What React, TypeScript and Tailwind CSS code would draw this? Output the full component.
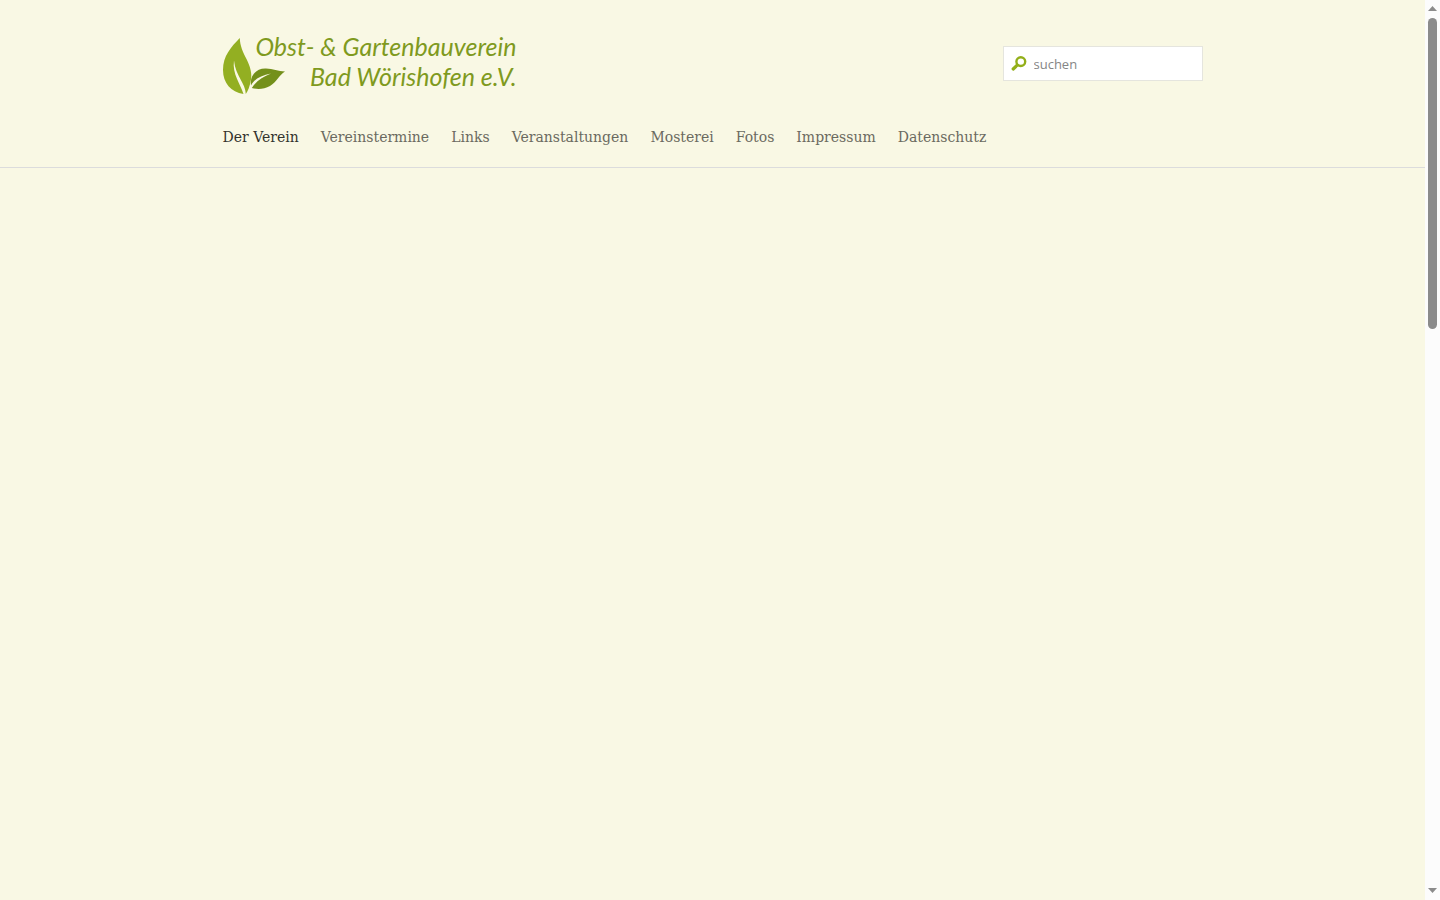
const navItems = [
  { label: 'Der Verein', href: '#verein', active: true },
  { label: 'Vereinstermine', href: '#termine' },
  { label: 'Links', href: '#links' },
  { label: 'Veranstaltungen', href: '#veranstaltungen' },
  { label: 'Mosterei', href: '#mosterei' },
  { label: 'Fotos', href: '#fotos' },
  { label: 'Impressum', href: '#impressum' },
  { label: 'Datenschutz', href: '#datenschutz' },
]

function LeafIcon() {
  return (
    <svg width="62" height="56" viewBox="0 0 62 56" aria-hidden="true">
      <path
        d="M16.8 0C17 8 20 14 23.5 21C27 28 29.8 36 27.5 44C26.5 49 25 53 22.8 56C22.5 45 12.5 38 11 22.5C9 36 17.5 46 20.5 56C8 54 0 45 0 32C0 18 8 9 16.8 0Z"
        fill="#93af22"
      />
      <path
        d="M28 47.5C26.5 37 34 30 43 30.5C50 30.5 55 33.5 62 33.5C56 37 54 44 47 48C41 51.5 34 51.5 28.8 50C33 43 40 39 48 35.5C38 37.5 31 41 28 47.5Z"
        fill="#74901b"
      />
    </svg>
  )
}

function Logo() {
  return (
    <a href="#start" className="grid w-[294px] text-[#7f9a1e]">
      <span className="col-start-1 row-start-1 pt-[7px]">
        <LeafIcon />
      </span>
      <span className="col-start-1 row-start-1 text-right font-['Lato',sans-serif] text-[25px] leading-[30px] italic whitespace-nowrap">
        Obst- &amp; Gartenbauverein
        <br />
        Bad Wörishofen e.V.
      </span>
    </a>
  )
}

function SearchBox() {
  return (
    <form
      role="search"
      className="mt-[15px] flex h-[35px] w-[200px] items-center gap-[7px] border border-[#e5e5de] bg-white pl-[7px]"
    >
      <label htmlFor="search" className="shrink-0">
        <svg
          width="16"
          height="16"
          viewBox="0 0 16 16"
          fill="none"
          stroke="#93af1a"
          role="img"
          aria-label="suchen"
        >
          <circle cx="9.8" cy="5.6" r="4.4" strokeWidth="2.4" />
          <path d="M6.2 9.2L2.2 13" strokeWidth="3.2" strokeLinecap="round" />
        </svg>
      </label>
      <input
        id="search"
        type="text"
        placeholder="suchen"
        className="h-full w-full min-w-0 bg-transparent pt-px font-['Open_Sans',sans-serif] text-[13px] text-[#777] outline-none placeholder:text-[#858585]"
      />
    </form>
  )
}

function ScrollTrack() {
  return (
    <div className="flex w-[15px] shrink-0 flex-col items-center bg-[#fcfcfc] pt-[6px] pb-[7px]" aria-hidden="true">
      <svg width="9" height="5" viewBox="0 0 9 5" fill="#8b8b8b">
        <path d="M0 5L4.5 0L9 5Z" />
      </svg>
      <div className="mt-[7px] h-[311px] w-[9px] rounded-full bg-[#8b8b8b]" />
      <svg className="mt-auto" width="9" height="5" viewBox="0 0 9 5" fill="#8b8b8b">
        <path d="M0 0L4.5 5L9 0Z" />
      </svg>
    </div>
  )
}

export default function App() {
  return (
    <div className="flex min-h-screen bg-[#f9f8e4]">
      <div className="min-w-0 flex-1">
        <header className="border-b border-[#dcdcdc] pt-[31px] pb-[19px]">
          <div className="mx-auto max-w-[980px]">
            <div className="flex items-start justify-between">
              <Logo />
              <SearchBox />
            </div>
            <nav className="mt-8">
              <ul className="flex flex-wrap gap-[22px] font-['DejaVu_Serif',serif] text-[14px] leading-[22px]">
                {navItems.map((item) => (
                  <li key={item.label}>
                    <a href={item.href} className={item.active ? 'text-[#33332d]' : 'text-[#6b6a60]'}>
                      {item.label}
                    </a>
                  </li>
                ))}
              </ul>
            </nav>
          </div>
        </header>
        <main />
      </div>
      <ScrollTrack />
    </div>
  )
}
